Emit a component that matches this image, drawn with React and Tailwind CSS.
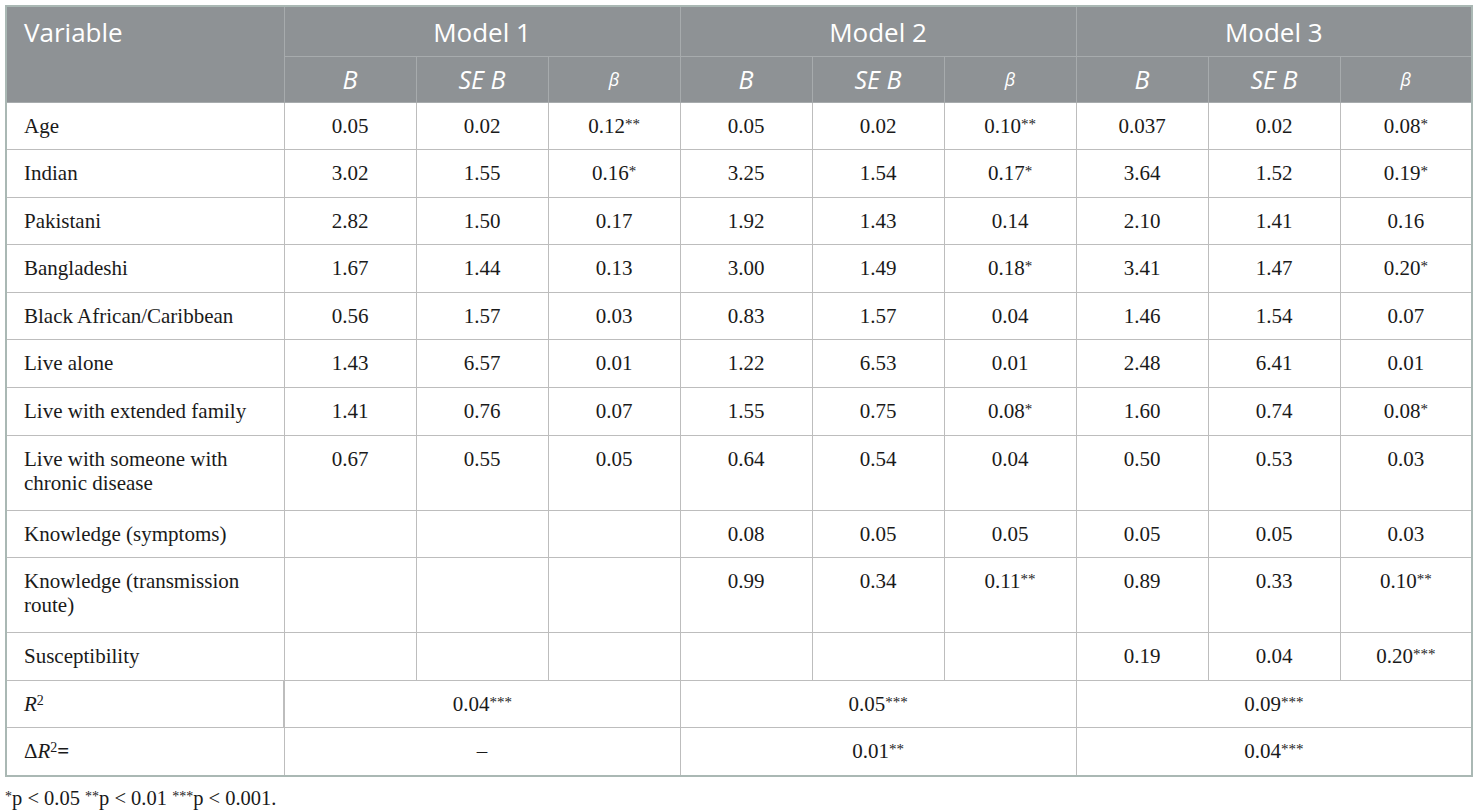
import React from "react";

const rows = [
  ["Age", "0.05", "0.02", "0.12**", "0.05", "0.02", "0.10**", "0.037", "0.02", "0.08*"],
  ["Indian", "3.02", "1.55", "0.16*", "3.25", "1.54", "0.17*", "3.64", "1.52", "0.19*"],
  ["Pakistani", "2.82", "1.50", "0.17", "1.92", "1.43", "0.14", "2.10", "1.41", "0.16"],
  ["Bangladeshi", "1.67", "1.44", "0.13", "3.00", "1.49", "0.18*", "3.41", "1.47", "0.20*"],
  ["Black African/Caribbean", "0.56", "1.57", "0.03", "0.83", "1.57", "0.04", "1.46", "1.54", "0.07"],
  ["Live alone", "1.43", "6.57", "0.01", "1.22", "6.53", "0.01", "2.48", "6.41", "0.01"],
  ["Live with extended family", "1.41", "0.76", "0.07", "1.55", "0.75", "0.08*", "1.60", "0.74", "0.08*"],
  ["Live with someone with chronic disease", "0.67", "0.55", "0.05", "0.64", "0.54", "0.04", "0.50", "0.53", "0.03", true],
  ["Knowledge (symptoms)", "", "", "", "0.08", "0.05", "0.05", "0.05", "0.05", "0.03"],
  ["Knowledge (transmission route)", "", "", "", "0.99", "0.34", "0.11**", "0.89", "0.33", "0.10**", true],
  ["Susceptibility", "", "", "", "", "", "", "0.19", "0.04", "0.20***"],
];

function Val({ v }) {
  const m = v.match(/^([^*]*)(\**)$/);
  if (!m || !m[2]) return <>{v}</>;
  return (
    <>
      {m[1]}
      <span className="relative top-[-4px] text-[15px] leading-none">{m[2]}</span>
    </>
  );
}

const cell = "align-top pt-[11px] text-center leading-[24px] border border-[#bdbdbd]";
const hcell = "font-normal border border-[#a7abad]";
const first = "align-top pt-[11px] pl-[17px] pr-[10px] leading-[24px] border border-[#bdbdbd]";

export default function App() {
  const serif = { fontFamily: '"Liberation Serif", "Times New Roman", serif' };
  return (
    <div className="w-[1476px] h-[810px] bg-white pt-[5px] px-[5px]">
      <table
        className="w-[1466px] table-fixed border-collapse border-2 border-[#aab8b4] text-[21px] text-[#1a1a1a]"
        style={serif}
      >
        <colgroup>
          <col className="w-[278px]" />
          {Array.from({ length: 9 }).map((_, i) => (
            <col key={i} className="w-[132px]" />
          ))}
        </colgroup>
        <thead className="bg-[#8e9295] text-white" style={{ fontFamily: '"Open Sans", Lato, sans-serif' }}>
          <tr className="h-[50px]">
            <th rowSpan={2} className={`${hcell} text-left align-top text-[26px] leading-[32px] pl-[17px] pt-[9px]`}>
              Variable
            </th>
            <th colSpan={3} className={`${hcell} text-[26px] leading-[32px] pt-[2px]`}>Model 1</th>
            <th colSpan={3} className={`${hcell} text-[26px] leading-[32px] pt-[2px]`}>Model 2</th>
            <th colSpan={3} className={`${hcell} text-[26px] leading-[32px] pt-[2px]`}>Model 3</th>
          </tr>
          <tr className="h-[46px]">
            {[0, 1, 2].map((k) => (
              <React.Fragment key={k}>
                <th className={`${hcell} italic text-[25px] leading-[30px]`}>B</th>
                <th className={`${hcell} italic text-[25px] leading-[30px]`}>SE B</th>
                <th className={`${hcell} italic text-[18px] leading-[30px]`}>β</th>
              </React.Fragment>
            ))}
          </tr>
        </thead>
        <tbody>
          {rows.map((r) => {
            const tall = r[10] === true;
            return (
              <tr key={r[0]} className={tall ? "h-[75px]" : "h-[47.6px]"}>
                <td className={first}>{r[0]}</td>
                {r.slice(1, 10).map((v, i) => (
                  <td key={i} className={cell}>
                    <Val v={v} />
                  </td>
                ))}
              </tr>
            );
          })}
          <tr className="h-[47.6px]">
            <td className={first}>
              <i>R</i>
              <span className="relative top-[-6px] text-[14px] leading-none">2</span>
            </td>
            <td colSpan={3} className={`${cell} border-l-2`}><Val v="0.04***" /></td>
            <td colSpan={3} className={cell}><Val v="0.05***" /></td>
            <td colSpan={3} className={cell}><Val v="0.09***" /></td>
          </tr>
          <tr className="h-[47.6px]">
            <td className={first}>
              Δ<i>R</i>
              <span className="relative top-[-6px] text-[14px] leading-none">2</span>
              <b>=</b>
            </td>
            <td colSpan={3} className={cell}>–</td>
            <td colSpan={3} className={cell}><Val v="0.01**" /></td>
            <td colSpan={3} className={cell}><Val v="0.04***" /></td>
          </tr>
        </tbody>
      </table>
      <div className="mt-[9px] text-[20.5px] text-[#1a1a1a] leading-[24px]" style={serif}>
        <span className="relative top-[-4px] text-[14px]">*</span>p &lt; 0.05{" "}
        <span className="relative top-[-4px] text-[14px]">**</span>p &lt; 0.01{" "}
        <span className="relative top-[-4px] text-[14px]">***</span>p &lt; 0.001.
      </div>
    </div>
  );
}
